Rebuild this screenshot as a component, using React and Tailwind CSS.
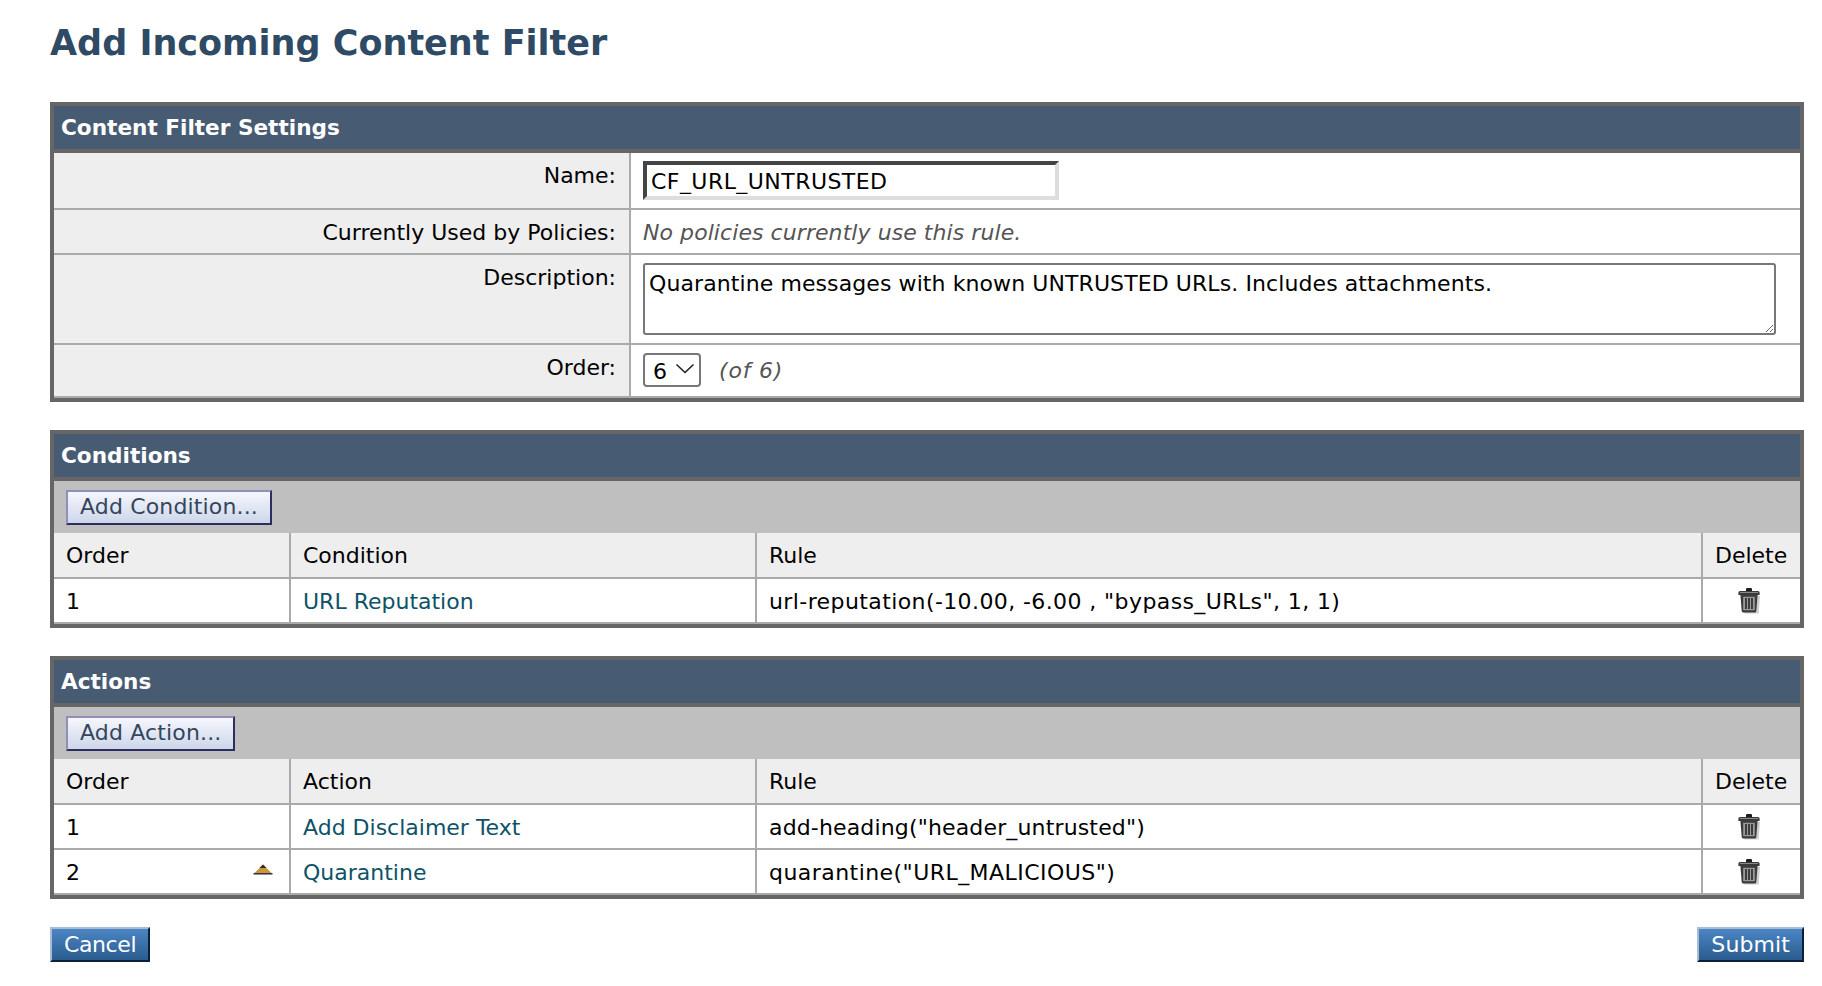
import React from 'react';

const FONT = "font-['DejaVu_Sans',Verdana,sans-serif]";

function TrashIcon() {
  return (
    <svg width="26" height="28" viewBox="0 0 26 28" className="block">
      <path d="M6 9h17l-1.4 17.5H7.4z" fill="#bbbbbb" opacity="0.7" />
      <rect x="9" y="1" width="6" height="3.5" rx="1.2" fill="#1c1c1c" />
      <path d="M3 4h18a1.6 1.6 0 0 1 1.6 1.6V8H1.4V5.6A1.6 1.6 0 0 1 3 4z" fill="#3a3a3a" />
      <rect x="3" y="5" width="18" height="1" fill="#8a8a8a" />
      <path d="M3.4 8h17.2l-1.3 16a1.6 1.6 0 0 1-1.6 1.5H6.3a1.6 1.6 0 0 1-1.6-1.5z" fill="#3c3c3c" />
      <rect x="6.2" y="9.8" width="11.6" height="13.4" fill="#9a9a9a" />
      <path d="M9 11v11M12 11v11M15 11v11" stroke="#1f1f1f" strokeWidth="1.5" />
    </svg>
  );
}

function UpArrow() {
  return (
    <svg width="20" height="11" viewBox="0 0 20 11" className="block mb-[6px]">
      <path d="M10 0.5 L19.5 10 H0.5 Z" fill="#c9963c" />
      <path d="M10 0.5 L13.5 4 H6.5 Z" fill="#3a2a1a" />
      <path d="M0.5 9.2 H19.5 V10.5 H0.5 Z" fill="#1e1a3a" />
    </svg>
  );
}

function PanelHeader({ children }) {
  return (
    <div className="h-[41px] flex items-center pl-[7px] pt-[2px] bg-[#475b73] text-white font-bold text-[21.6px] border-b-4 border-[#666666] box-content">
      {children}
    </div>
  );
}

function SettingRow({ label, height, children }) {
  return (
    <div className={`flex border-b-2 border-[#aaaaaa] ${height}`}>
      <div className="w-[577px] shrink-0 bg-[#eeeeee] border-r-2 border-[#aaaaaa] text-right pr-[13px] pt-[6px] text-black">
        {label}
      </div>
      <div className="flex-1 pl-[12px] bg-white">{children}</div>
    </div>
  );
}

function ToolButton({ children }) {
  return (
    <button className="h-[35px] px-[12px] text-[22px] leading-none tracking-[0.15px] text-[#34465c] bg-gradient-to-b from-[#f6f7fd] to-[#cdd6ea] border-2 border-t-[#8f8fb8] border-l-[#8f8fb8] border-r-[#2d2d5f] border-b-[#2d2d5f]">
      {children}
    </button>
  );
}

function RuleTable({ title, addLabel, itemLabel, rows }) {
  return (
    <div className="border-4 border-[#666666] mb-[28px]">
      <PanelHeader>{title}</PanelHeader>
      <div className="h-[52px] bg-[#bfbfbf] flex items-center pl-[12px]">
        <ToolButton>{addLabel}</ToolButton>
      </div>
      <div className="flex h-[46px] bg-[#eeeeee] border-b-2 border-[#aaaaaa] items-stretch">
        <div className="w-[237px] shrink-0 border-r-2 border-[#aaaaaa] pl-[12px] pt-[1px] flex items-center">Order</div>
        <div className="w-[466px] shrink-0 border-r-2 border-[#aaaaaa] pl-[12px] pt-[1px] flex items-center">{itemLabel}</div>
        <div className="w-[946px] shrink-0 border-r-2 border-[#aaaaaa] pl-[12px] pt-[1px] flex items-center">Rule</div>
        <div className="flex-1 pl-[12px] pt-[1px] flex items-center">Delete</div>
      </div>
      {rows.map((r, i) => (
        <div key={i} className="flex h-[45px] bg-white border-b-2 border-[#aaaaaa] items-stretch">
          <div className="w-[237px] shrink-0 border-r-2 border-[#aaaaaa] pl-[12px] pr-[16px] pt-[1px] flex items-center justify-between">
            <span>{r.order}</span>
            {r.up && <UpArrow />}
          </div>
          <div className="w-[466px] shrink-0 border-r-2 border-[#aaaaaa] pl-[12px] pt-[1px] flex items-center text-[#0e5268]">{r.name}</div>
          <div className={`w-[946px] shrink-0 border-r-2 border-[#aaaaaa] pl-[12px] pt-[1px] flex items-center ${r.spacing}`}>{r.rule}</div>
          <div className="flex-1 flex items-center justify-center pr-[4px]">
            <TrashIcon />
          </div>
        </div>
      ))}
    </div>
  );
}

function BlueButton({ children, spacing }) {
  return (
    <button className={`h-[35px] px-[12px] text-[22px] leading-none text-white bg-gradient-to-b from-[#4b86c6] to-[#2b5c8e] border-2 border-t-[#a9bdd2] border-l-[#a9bdd2] border-r-[#0b2138] border-b-[#0b2138] ${spacing}`}>
      {children}
    </button>
  );
}

export default function App() {
  return (
    <div className={`${FONT} bg-white h-[986px] overflow-hidden pl-[50px] pr-[18px] text-[22px] text-black`}>
      <h1 className="h-[102px] pt-[21px] text-[35px] leading-[44px] font-bold text-[#2e4a64]">Add Incoming Content Filter</h1>

      <div className="border-4 border-[#666666] mb-[28px]">
        <PanelHeader>Content Filter Settings</PanelHeader>
        <SettingRow label="Name:" height="h-[57px]">
          <input
            defaultValue="CF_URL_UNTRUSTED"
            className="mt-[8px] w-[416px] h-[39px] px-[4px] pt-[1px] text-[22px] tracking-[0.45px] border-4 border-t-[#444444] border-l-[#444444] border-r-[#dddddd] border-b-[#dddddd] outline-none"
          />
        </SettingRow>
        <SettingRow label="Currently Used by Policies:" height="h-[45px]">
          <div className="pt-[6px] italic tracking-[0.07px] text-[#555555]">No policies currently use this rule.</div>
        </SettingRow>
        <SettingRow label="Description:" height="h-[90px]">
          <textarea
            defaultValue="Quarantine messages with known UNTRUSTED URLs. Includes attachments."
            className="mt-[8px] block w-[1133px] h-[72px] px-[4px] pt-[2px] text-[22px] tracking-[0.09px] border-2 border-[#777777] rounded-[3px] outline-none"
          />
        </SettingRow>
        <SettingRow label="Order:" height="h-[53px]">
          <div className="flex items-center gap-[18px] pt-[8px]">
            <div className="relative w-[58px] h-[34px]">
              <select className="appearance-none w-full h-full pl-[8px] text-[22px] border-2 border-[#777777] rounded-[4px] bg-white outline-none">
                <option>6</option>
              </select>
              <svg width="20" height="11" viewBox="0 0 20 11" className="absolute right-[6px] top-[10px] pointer-events-none">
                <path d="M1.5 1.5 L10 9.5 L18.5 1.5" fill="none" stroke="#222" strokeWidth="1.6" />
              </svg>
            </div>
            <span className="italic tracking-[0.8px] text-[#555555]">(of 6)</span>
          </div>
        </SettingRow>
      </div>

      <RuleTable
        title="Conditions"
        addLabel="Add Condition..."
        itemLabel="Condition"
        rows={[{ order: 1, name: 'URL Reputation', rule: 'url-reputation(-10.00, -6.00 , "bypass_URLs", 1, 1)', spacing: 'tracking-[0.4px]' }]}
      />
      <RuleTable
        title="Actions"
        addLabel="Add Action..."
        itemLabel="Action"
        rows={[
          { order: 1, name: 'Add Disclaimer Text', rule: 'add-heading("header_untrusted")', spacing: 'tracking-[0.15px]' },
          { order: 2, up: true, name: 'Quarantine', rule: 'quarantine("URL_MALICIOUS")', spacing: 'tracking-[0.45px]' },
        ]}
      />

      <div className="flex justify-between">
        <BlueButton spacing="tracking-[-0.4px]">Cancel</BlueButton>
        <BlueButton spacing="tracking-[0.1px]">Submit</BlueButton>
      </div>
    </div>
  );
}
